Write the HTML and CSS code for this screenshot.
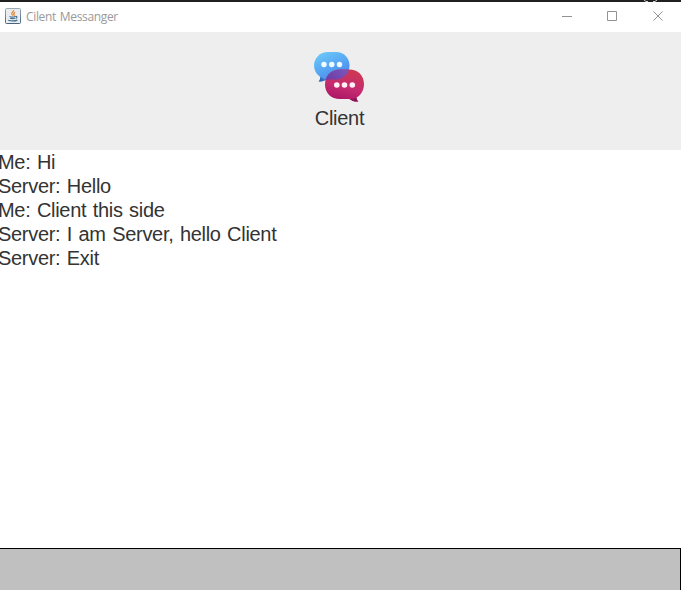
FILE: index.html
```html
<!DOCTYPE html>
<html lang="en">
<head>
<meta charset="utf-8">
<title>Cilent Messanger</title>
<link rel="stylesheet" href="styles.css">
</head>
<body>
<div class="window">
  <header class="titlebar">
    <svg class="app-icon" width="16" height="16" viewBox="0 0 16 16">
      <defs><linearGradient id="tile" x1="0" y1="0" x2="0" y2="1"><stop offset="0" stop-color="#9aaab8"/><stop offset="1" stop-color="#47657f"/></linearGradient></defs>
      <rect x=".5" y=".5" width="15" height="15" rx="1" fill="#e9edf0" stroke="url(#tile)"/>
      <path d="M8.600 2c.8 1.700-2.700 2.400-1.800 4 .3.600.9 1 .8 1.600M10.200 4.400c-1.700.8-1.900 1.400-1.200 2.300.4.500.2.800-.2 1.100" fill="none" stroke="#e58a3c" stroke-width="1.300"/>
      <path d="M4.500 8.500c1.800.7 4.200.6 6 0M5 10.300c1.600.5 3.400.5 4.900 0M10.600 8.500c1.800-.3 1.600 1.400 0 2M3.200 12.200c2.400 1 7 1 9.200-.1" fill="none" stroke="#47708f" stroke-width="1.200"/>
    </svg>
    <span class="title">Cilent Messanger</span>
    <svg class="controls" width="138" height="30" viewBox="0 0 138 30" fill="none" stroke="#929292">
      <path d="M19 14.500h10M64.500 9.500h9v9h-9zM110.500 9.500l9 9M119.500 9.500l-9 9"/>
    </svg>
    <svg class="edge-mark" width="16" height="2" viewBox="0 0 16 2"><path d="M1 0l2 1.500h2M14 0l-2 1.500h-2" fill="none" stroke="#ccc"/></svg>
  </header>
  <section class="banner">
    <svg class="logo" width="50" height="50" viewBox="0 0 50 50">
      <defs>
        <linearGradient id="blue" x1=".2" y1="0" x2=".8" y2="1"><stop offset="0" stop-color="#6bc8f7"/><stop offset="1" stop-color="#4485ef"/></linearGradient>
        <linearGradient id="red" x1=".7" y1="0" x2=".4" y2="1"><stop offset="0" stop-color="#cf3850"/><stop offset=".55" stop-color="#c52c71"/><stop offset="1" stop-color="#aa1463"/></linearGradient>
        <linearGradient id="overlap" x1="0" y1="1" x2="1" y2="0"><stop offset="0" stop-color="#632b91"/><stop offset="1" stop-color="#8061c7"/></linearGradient>
        <linearGradient id="tail" x1="0" y1="0" x2="1" y2="0"><stop offset="0" stop-color="#2859a9"/><stop offset="1" stop-color="#4586eb"/></linearGradient>
        <clipPath id="blue-shape"><path d="M14 0h8c8 0 13.500 6 13.500 13.500S30 27.500 22 27.500H13.500C10 29 7 30 4.500 29.500 6 28 6.600 26.500 6.500 25 2.300 22.700 0 18.500 0 13.500 0 6 6 0 14 0z"/></clipPath>
      </defs>
      <path d="M6 23l8 4.500C10 29 7 30 4.500 29.500 6 28 6.600 26.500 6 23z" fill="url(#tail)"/>
      <path d="M14 0h8c8 0 13.500 6 13.500 13.500S30 27.500 22 27.500H13.500C9 27.500 0 23 0 13.500 0 6 6 0 14 0z" fill="url(#blue)"/>
      <path d="M26 17.500h9c9 0 15 6 15 14.500 0 6-2.800 11-7.500 13.500 0 1.500.7 3 2 4-3.500.4-6.500-.6-9-2.500H26C17 47 11 41 11 32.500S17 17.500 26 17.500z" fill="url(#red)"/>
      <path d="M26 17.500h9c9 0 15 6 15 14.500s-6 15-15 15h-9C17 47 11 41 11 32.500S17 17.500 26 17.500z" fill="url(#overlap)" clip-path="url(#blue-shape)"/>
      <path d="M35.500 47c3 0 5.200-.5 7-1.500 0 1.500.7 3 2 4-3.500.4-6.500-.6-9-2.500z" fill="#8e1256"/>
      <g fill="#f2fbff"><circle cx="10" cy="12.500" r="2.700"/><circle cx="17.800" cy="12.500" r="2.700"/><circle cx="25.500" cy="12.500" r="2.700"/></g>
      <g fill="#fff0f6"><circle cx="22.800" cy="33" r="2.800"/><circle cx="30.500" cy="33" r="2.800"/><circle cx="38.300" cy="33" r="2.800"/></g>
    </svg>
    <div class="name">Client</div>
  </section>
  <main class="messages">
    <div>Me: Hi</div>
    <div>Server: Hello</div>
    <div>Me: Client this side</div>
    <div>Server: I am Server, hello Client</div>
    <div>Server: Exit</div>
  </main>
  <footer class="input"></footer>
</div>
</body>
</html>
```
FILE: styles.css
```css
* { box-sizing: border-box; }
body { margin: 0; }
.window {
  width: 681px;
  height: 590px;
  display: flex;
  flex-direction: column;
  overflow: hidden;
  background: #fff;
  color: #333;
  font: 20px/24px "Liberation Sans", Arial, sans-serif;
  letter-spacing: -0.3px;
  word-spacing: 1.2px;
}
.titlebar {
  position: relative;
  height: 32px;
  flex: none;
  display: flex;
  align-items: center;
  padding-left: 5px;
  border-top: 2px solid #211f21;
}
.app-icon { margin-right: 5px; margin-bottom: 2px; }
.title {
  font: 12px/16px "Open Sans", "Noto Sans", sans-serif;
  letter-spacing: -0.35px;
  color: #999;
}
.controls { margin-left: auto; }
.edge-mark { position: absolute; right: 22px; top: -2px; }
.banner {
  height: 118px;
  flex: none;
  display: flex;
  flex-direction: column;
  align-items: center;
  padding: 20px 3px 0 0;
  background: #eee;
}
.logo { display: block; flex: none; }
.name { margin-top: 4px; padding-left: 1px; }
.messages {
  flex: 1;
  margin-left: -2px;
  white-space: nowrap;
}
.input {
  height: 42px;
  flex: none;
  background: #c0c0c0;
  border-top: 1px solid #000;
  border-right: 1px solid #000;
}
```
